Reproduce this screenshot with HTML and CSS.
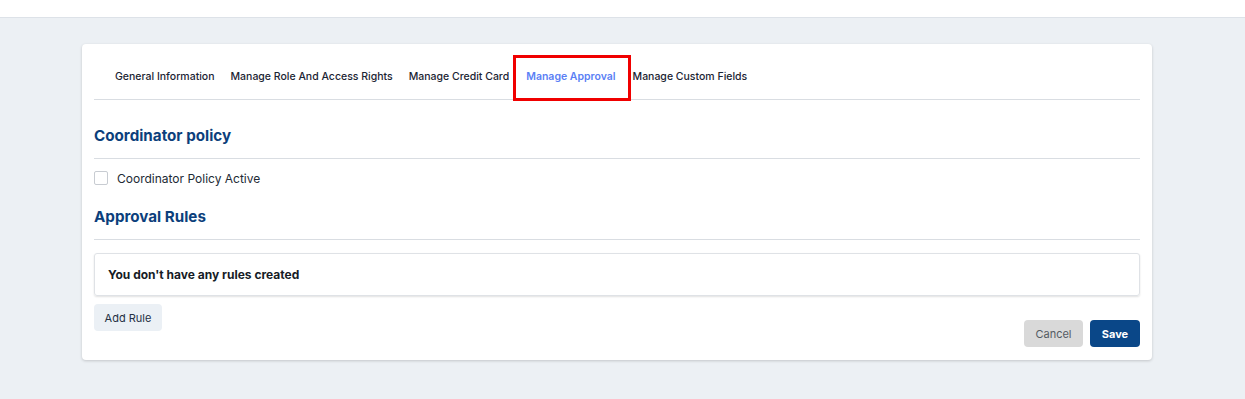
FILE: index.html
```html
<!DOCTYPE html>
<html>
<head>
<meta charset="utf-8">
<link rel="stylesheet" href="styles.css">
</head>
<body>
<header class="topbar"></header>
<main class="page">
  <section class="card">
    <nav class="tabs">
      <a class="tab tab-first">General Information</a>
      <a class="tab">Manage Role And Access Rights</a>
      <a class="tab">Manage Credit Card</a>
      <a class="tab tab-active">Manage Approval</a>
      <a class="tab tab-after">Manage Custom Fields</a>
    </nav>
    <h2 class="section-title">Coordinator policy</h2>
    <label class="check-row">
      <span class="checkbox"></span>
      <span class="check-label">Coordinator Policy Active</span>
    </label>
    <h2 class="section-title section-title-2">Approval Rules</h2>
    <div class="empty-box">You don't have any rules created</div>
    <div class="footer">
      <button class="btn btn-light">Add Rule</button>
      <div class="actions">
        <button class="btn btn-cancel">Cancel</button>
        <button class="btn btn-save">Save</button>
      </div>
    </div>
  </section>
</main>
</body>
</html>
```
FILE: styles.css
```css
* { box-sizing: border-box; }
html, body { margin: 0; padding: 0; }
body {
  font-family: Inter, "Noto Sans", sans-serif;
  background: #ecf0f4;
  width: 1245px;
  height: 399px;
  overflow: hidden;
  color: #1f2937;
}
.topbar {
  height: 18px;
  background: #ffffff;
  border-bottom: 1px solid #dde2e8;
}
.page {
  padding: 26px 0 0 82px;
}
.card {
  width: 1070px;
  background: #fff;
  border-radius: 4px;
  box-shadow: 0 1px 3px rgba(0,0,0,0.18);
  padding: 11px 12px 13px 12px;
}
.tabs {
  display: flex;
  align-items: center;
  height: 45px;
  border-bottom: 1px solid #d9dde2;
}
.tab {
  font-size: 10.5px;
  font-weight: 500;
  color: #1b2433;
  padding: 0 8px 2px 8px;
  white-space: nowrap;
}
.tab-first { margin-left: 13px; }
.tab-active {
  color: #5b7ff5;
  font-weight: 600;
  border: 3px solid #f00000;
  height: 46px;
  margin-bottom: -1px;
  display: flex;
  align-items: center;
  padding: 0 12px 3px 10px;
  margin-left: -4px;
  margin-right: 2px;
}
.tab-after { padding-left: 0; }
.section-title {
  margin: 26px 0 0 0;
  font-size: 15.2px;
  line-height: 20px;
  font-weight: 700;
  color: #0c3f7c;
  padding-bottom: 12px;
  border-bottom: 1px solid #d9dde2;
}
.section-title-2 { margin-top: 20px; }
.check-row {
  display: flex;
  align-items: center;
  margin-top: 10px;
  height: 18px;
}
.checkbox {
  width: 14px;
  height: 14px;
  border: 1px solid #c8ccd2;
  border-radius: 2px;
  background: #fff;
}
.check-label {
  margin-left: 9px;
  font-size: 12px;
  color: #222a35;
}
.empty-box {
  margin-top: 13px;
  height: 43px;
  display: flex;
  align-items: center;
  padding-left: 13px;
  border: 1px solid #dfe2e6;
  border-radius: 3px;
  box-shadow: 0 1px 2px rgba(0,0,0,0.12);
  font-size: 12px;
  font-weight: 700;
  color: #161c26;
}
.footer {
  display: flex;
  justify-content: space-between;
  align-items: flex-start;
  margin-top: 8px;
}
.btn {
  font-family: inherit;
  border: none;
  border-radius: 4px;
  font-size: 11px;
  height: 27px;
  cursor: pointer;
}
.btn-light {
  background: #ebf0f5;
  color: #243044;
  width: 68px;
}
.actions {
  display: flex;
  gap: 7px;
  margin-top: 16px;
}
.btn-cancel {
  background: #d9d9d9;
  color: #555b63;
  width: 59px;
}
.btn-save {
  background: #0a4788;
  color: #fff;
  font-weight: 700;
  width: 50px;
}
```
